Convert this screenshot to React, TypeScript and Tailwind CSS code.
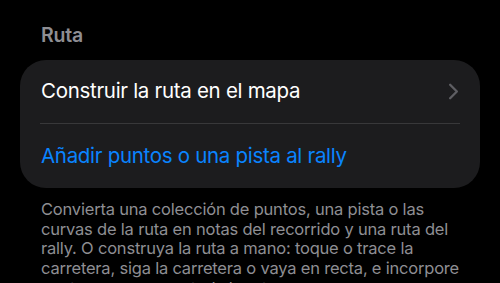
import { ChevronRight } from "lucide-react";

export default function App() {
  return (
    <main
      className="w-[500px] h-[283px] overflow-hidden bg-black"
      style={{ fontFamily: "Inter, 'Noto Sans', sans-serif" }}
    >
      {/* Section header */}
      <div className="pt-[22px] pl-[41px] h-[60px]">
        <h2 className="text-[19.5px] leading-[26px] font-semibold text-[#8e8e93] tracking-[-0.2px]">Ruta</h2>
      </div>

      {/* Card */}
      <div className="mx-5 bg-[#1c1c1e] rounded-[26px] overflow-hidden">
        <button className="w-full h-[63px] flex items-center justify-between pl-[21px] pr-[13px] text-left">
          <span className="text-[20.5px] text-white tracking-[-0.3px]">Construir la ruta en el mapa</span>
          <ChevronRight className="w-[27px] h-[27px] text-[#5e5e63]" strokeWidth={2.1} />
        </button>
        <div className="mx-5 h-px bg-[#38383a]" />
        <button className="w-full h-[64px] flex items-center pl-[21px] text-left">
          <span className="text-[20.5px] text-[#0a84ff] tracking-[-0.3px]">Añadir puntos o una pista al rally</span>
        </button>
      </div>

      {/* Footer */}
      <p className="pt-[12px] pl-[41px] pr-[36px] text-[16.5px] leading-[19.7px] text-[#8e8e93] tracking-[-0.2px]">
        Convierta una colección de puntos, una pista o las curvas de la ruta en notas del recorrido y una ruta del
        rally. O construya la ruta a mano: toque o trace la carretera, siga la carretera o vaya en recta, e incorpore
        puntos y curvas en toda la ruta.
      </p>
    </main>
  );
}
